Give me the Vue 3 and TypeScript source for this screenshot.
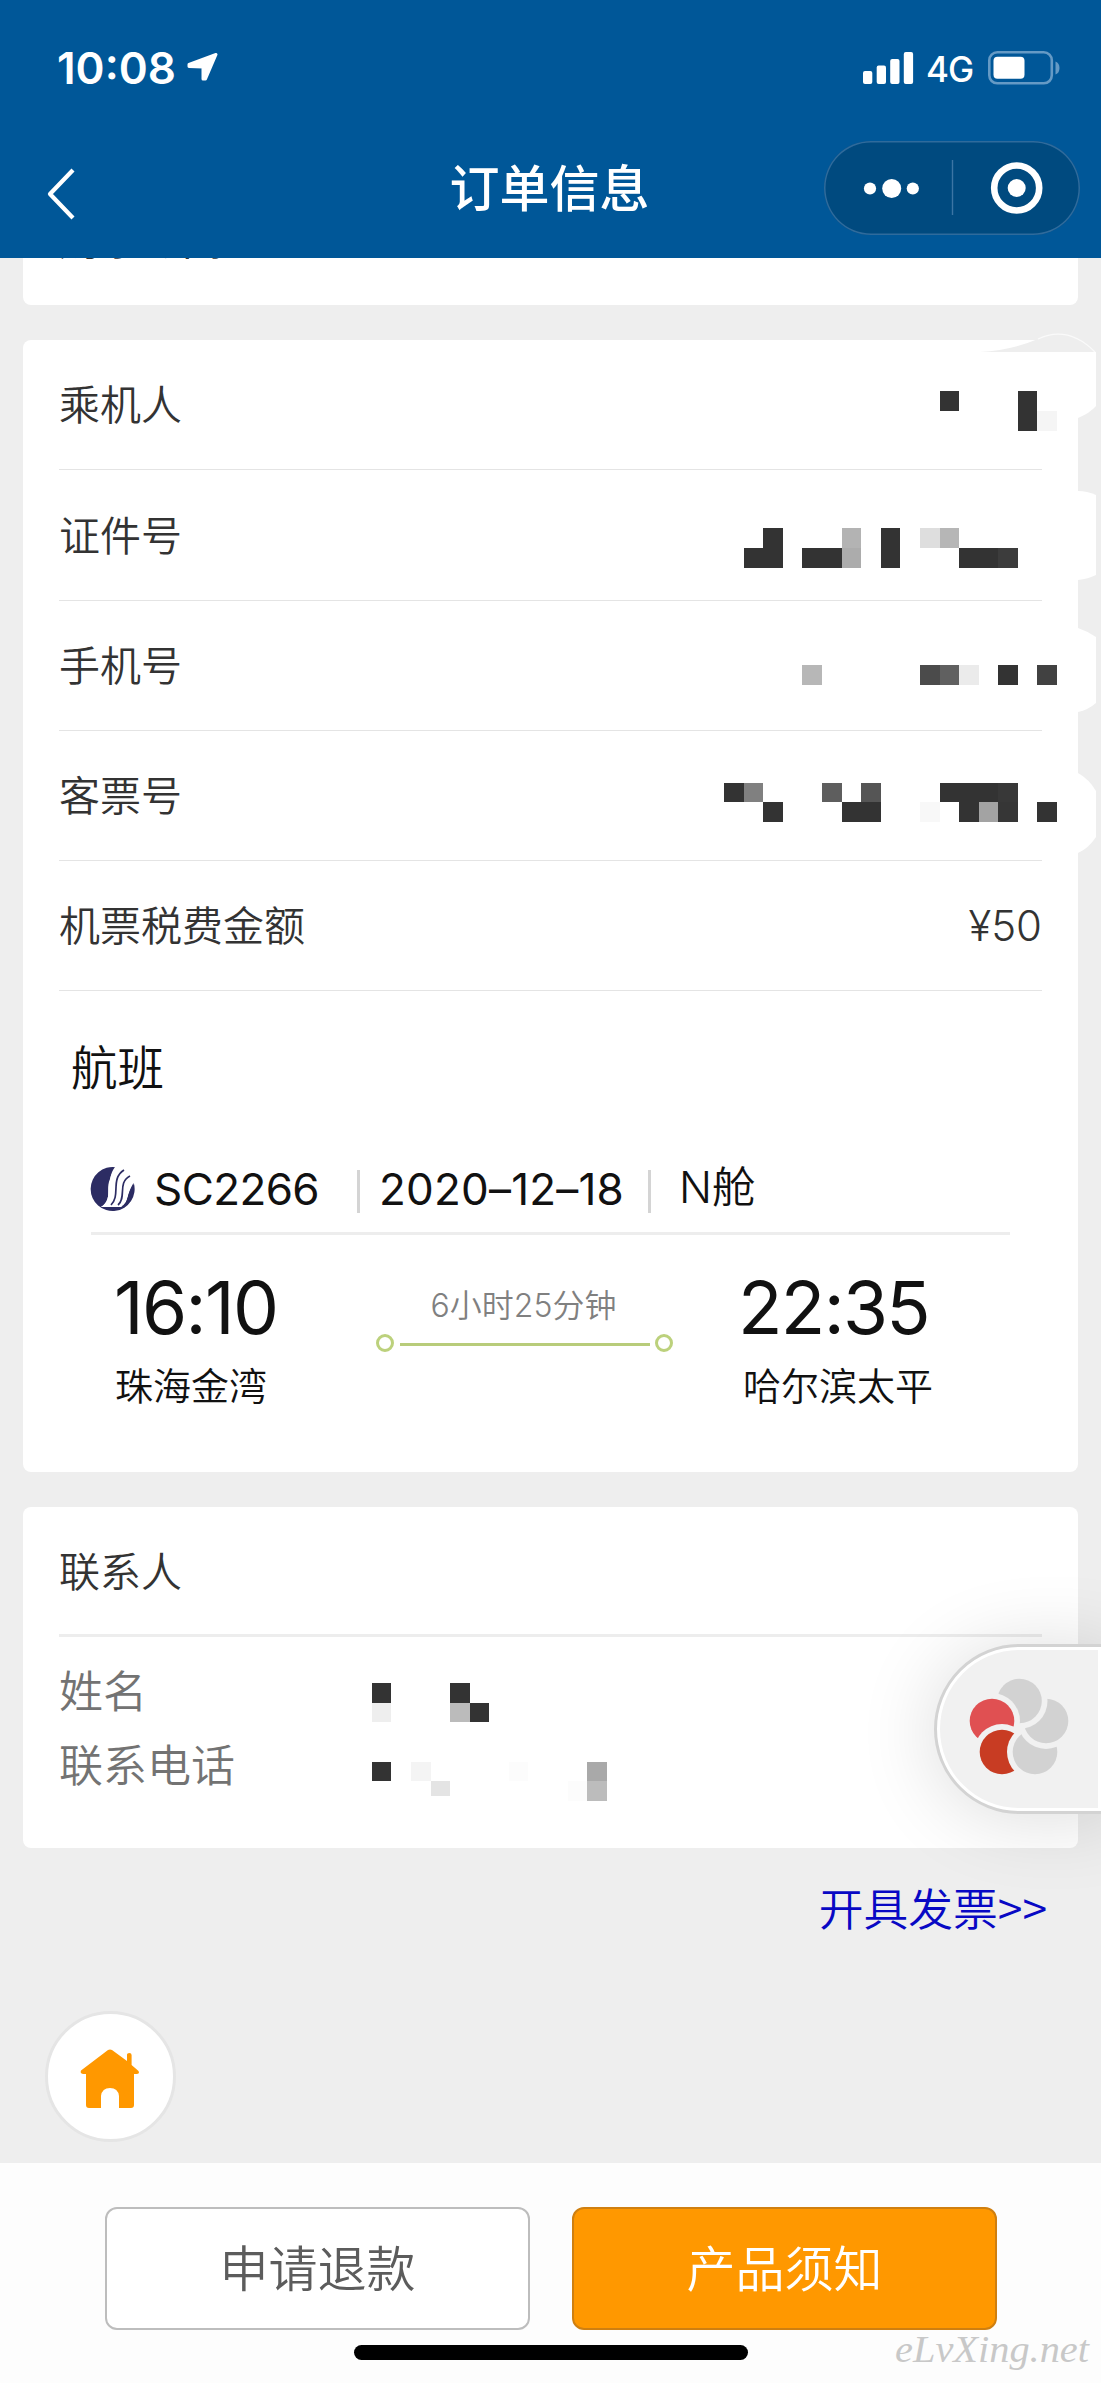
<script setup lang="ts">
interface Cell { c: number; r: number; fill: string; h?: number }

const rows: { label: string; value: string }[] = [
  { label: '乘机人', value: '' },
  { label: '证件号', value: '' },
  { label: '手机号', value: '' },
  { label: '客票号', value: '' },
  { label: '机票税费金额', value: '¥50' },
]

// Private values are covered by mosaic cells that sit on one page-wide grid.
const cellSize = 19.573
const dark = '#333333'
const cells: Cell[] = [
  { c: 48, r: 20, fill: dark }, { c: 52, r: 20, fill: dark }, { c: 52, r: 21, fill: dark }, { c: 53, r: 21, fill: '#f5f5f5' },
  { c: 39, r: 27, fill: dark }, { c: 38, r: 28, fill: dark }, { c: 39, r: 28, fill: dark },
  { c: 41, r: 28, fill: dark }, { c: 42, r: 28, fill: dark }, { c: 43, r: 27, fill: '#b3b3b3' }, { c: 43, r: 28, fill: '#acacac' },
  { c: 45, r: 27, fill: dark }, { c: 45, r: 28, fill: dark }, { c: 47, r: 27, fill: '#dedede' }, { c: 48, r: 27, fill: '#b6b6b6' },
  { c: 49, r: 28, fill: dark }, { c: 50, r: 28, fill: dark }, { c: 51, r: 28, fill: '#3c3c3c' },
  { c: 41, r: 34, fill: '#b7b7b7' }, { c: 47, r: 34, fill: '#4b4b4b' }, { c: 48, r: 34, fill: '#606060' },
  { c: 49, r: 34, fill: '#ebebeb' }, { c: 51, r: 34, fill: dark }, { c: 53, r: 34, fill: '#414141' },
  { c: 37, r: 40, fill: dark }, { c: 38, r: 40, fill: '#808080' }, { c: 39, r: 41, fill: dark },
  { c: 42, r: 40, fill: '#5e5e5e' }, { c: 44, r: 40, fill: '#555555' }, { c: 43, r: 41, fill: dark }, { c: 44, r: 41, fill: dark },
  { c: 47, r: 41, fill: '#f8f8f8' }, { c: 48, r: 40, fill: dark }, { c: 49, r: 40, fill: dark }, { c: 50, r: 40, fill: dark },
  { c: 51, r: 40, fill: '#383838' }, { c: 49, r: 41, fill: dark }, { c: 50, r: 41, fill: '#a3a3a3' }, { c: 51, r: 41, fill: '#363636' },
  { c: 53, r: 41, fill: dark },
  { c: 19, r: 86, fill: dark }, { c: 19, r: 87, fill: '#eeeeee' }, { c: 23, r: 86, fill: dark }, { c: 23, r: 87, fill: '#bbbbbb' }, { c: 24, r: 87, fill: dark },
  { c: 19, r: 90, fill: dark }, { c: 21, r: 90, fill: '#f4f4f4' }, { c: 22, r: 91, fill: '#e4e4e4', h: 15 }, { c: 26, r: 90, fill: '#fcfcfc' },
  { c: 29, r: 91, fill: '#fcfcfc' }, { c: 30, r: 90, fill: '#a9a9a9' }, { c: 30, r: 91, fill: '#bcbcbc' },
]
const at = (n: number) => Math.round(n * cellSize)

// Each petal is bitten by the next one in the list, leaving an even gap.
const petals = [
  { x: 85.5, y: 57, fill: '#d2d2d2', cut: [58, 77] },
  { x: 58, y: 77, fill: '#e05052', cut: [68, 108] },
  { x: 68, y: 108, fill: '#c83c23', cut: [101, 108] },
  { x: 101, y: 108, fill: '#d2d2d2', cut: [112, 77] },
  { x: 112, y: 77, fill: '#d2d2d2', cut: [85.5, 57] },
]
</script>

<template>
  <div class="page">
    <header class="header">
      <div class="status">
        <span class="clock">10:08</span>
        <svg class="locate" width="31" height="30" viewBox="0 0 31 30"><path d="M29 2.5 L18.5 27 L16 27 L16 15 L2 14.5 L2 12.5 Z" fill="#fff" stroke="#fff" stroke-width="3" stroke-linejoin="round" /></svg>
        <svg class="signal" width="51" height="32" viewBox="0 0 51 32" fill="#fff">
          <rect x="0" y="19" width="9.3" height="13" rx="2" /><rect x="13.7" y="13.5" width="9.3" height="18.5" rx="2" />
          <rect x="27.2" y="7" width="9.3" height="25" rx="2" /><rect x="40.8" y="0" width="9.3" height="32" rx="2" />
        </svg>
        <span class="network">4G</span>
        <svg class="battery" width="73" height="34" viewBox="0 0 73 34">
          <rect x="1.3" y="1.3" width="62.5" height="31" rx="8" fill="none" stroke="#659ac5" stroke-width="2.6" />
          <rect x="5.5" y="5.7" width="31" height="22" rx="4" fill="#fff" />
          <path d="M67.5 10.5 Q71.5 12 71.5 17 Q71.5 22 67.5 23.5 Z" fill="#659ac5" />
        </svg>
      </div>
      <div class="navbar">
        <svg class="back" width="32" height="54" viewBox="0 0 32 54"><path d="M27 3 L4 27 L27 51" fill="none" stroke="#fff" stroke-width="4.2" stroke-linejoin="round" /></svg>
        <h1 class="title">订单信息</h1>
        <div class="capsule">
          <svg width="256" height="94" viewBox="0 0 256 94">
            <g fill="#fff"><circle cx="46" cy="47.5" r="6.1" /><circle cx="67.7" cy="47.5" r="9.5" /><circle cx="88.8" cy="47.5" r="6.1" /><circle cx="192.7" cy="47" r="9" /></g>
            <path d="M128.5 19 V74" stroke="#3c75a4" stroke-width="1.4" />
            <circle cx="192.7" cy="47" r="22.5" fill="none" stroke="#fff" stroke-width="6.6" />
          </svg>
        </div>
      </div>
    </header>

    <main class="content">
      <section class="card previous"><div class="previous-text">购票时间</div></section>

      <section class="card order">
        <div v-for="row in rows" :key="row.label" class="row">
          <span>{{ row.label }}</span><span class="amount">{{ row.value }}</span>
        </div>
        <h2 class="flight-title">航班</h2>
        <div class="flight">
          <div class="flight-head">
            <svg class="airline" width="46" height="46" viewBox="0 0 46 46">
              <path d="M26 1.3 A22 22 0 1 0 43.8 17 L41 22 C36 30 39 35 31 41 L11 41 C23 34 15 24 20 13 C21 8 24 5 26 1.3 Z" fill="#2c2c63" />
              <path d="M11 41 H31 C40 36 35 28 45 17 L40 9 L28 1 L25 1 C15 14 24 33 11 41 Z" fill="#fff" />
              <path d="M34 4 C20 13 31 29 21 39 M40 10 C27 17 37 31 28 39" fill="none" stroke="#2c2c63" stroke-width="1.7" />
              <path d="M31 41 C40 35 36 29 43.5 17 C46 29 39 38 31 41 Z" fill="#2c2c63" />
            </svg>
            <span class="num code">SC2266</span><i class="bar bar-a"></i>
            <span class="num date">2020–12–18</span><i class="bar bar-b"></i>
            <span class="cabin">N舱</span>
          </div>
          <div class="route">
            <div class="stop from"><div class="time">16:10</div><div class="airport">珠海金湾</div></div>
            <div class="leg">
              <div class="duration">6小时25分钟</div>
              <div class="track"><i class="dot"></i><i class="line"></i><i class="dot"></i></div>
            </div>
            <div class="stop to"><div class="time">22:35</div><div class="airport">哈尔滨太平</div></div>
          </div>
        </div>
      </section>

      <section class="card contact">
        <h2 class="contact-title">联系人</h2>
        <div class="contact-row">姓名</div>
        <div class="contact-row">联系电话</div>
      </section>

      <a class="invoice">开具发票&gt;&gt;</a>

      <button class="home" aria-label="首页">
        <svg width="62" height="62" viewBox="0 0 62 62" fill="#ff9800">
          <path d="M29 2 Q31 .8 33 2 L48 13 V6.500 Q48 5 50.300 5 Q52.600 5 52.600 7 V17 L59.500 23 Q61 26 57.500 26 H55 V57 Q55 60 52 60 H40 V48 Q39 40 31 40 Q23 40 22 48 V60 H10 Q7 60 7 57 V26 H4 Q.8 25.500 2 22.500 Z" />
        </svg>
      </button>
    </main>

    <footer class="footer">
      <div class="actions"><button class="btn refund">申请退款</button><button class="btn notice">产品须知</button></div>
      <div class="indicator"></div>
      <svg class="watermark" width="215" height="54" viewBox="0 0 215 54"><text x="9" y="33" textLength="194" lengthAdjust="spacingAndGlyphs">eLvXing.net</text></svg>
    </footer>

    <svg class="redaction" width="1101" height="2383" viewBox="0 0 1101 2383">
      <path d="M980 352 Q1012 350 1038 339 Q1068 325 1095 352 Z" fill="#eee" />
      <path d="M1038 339 Q1068 325 1095 352" fill="none" stroke="#fafafa" stroke-width="1.200" />
      <g fill="#fff">
        <path d="M1070 352 H1096 V406 Q1090 413 1078 418 H1070 Z" />
        <path d="M1070 491 H1078 Q1087 491 1096 495 V575 Q1088 579 1078 580 H1070 Z" />
        <path d="M1070 628 H1078 Q1087 631 1096 637 V703 Q1088 710 1078 712 H1070 Z" />
        <path d="M1070 773 H1078 Q1089 779 1096 791 V837 Q1089 848 1078 853 H1070 Z" />
      </g>
      <rect v-for="(k, i) in cells" :key="i" :x="at(k.c)" :y="at(k.r)" :width="at(k.c + 1) - at(k.c)" :height="k.h ?? at(k.r + 1) - at(k.r)" :fill="k.fill" />
    </svg>

    <aside class="float">
      <div class="float-inner"></div>
      <svg class="flower" width="167" height="170" viewBox="0 0 167 170">
        <defs>
          <mask v-for="(p, i) in petals" :id="'petal-' + i" :key="i" maskUnits="userSpaceOnUse" x="0" y="0" width="167" height="170">
            <rect width="167" height="170" fill="#fff" /><circle :cx="p.cut[0]" :cy="p.cut[1]" r="28" fill="#000" />
          </mask>
        </defs>
        <circle v-for="(p, i) in petals" :key="i" :cx="p.x" :cy="p.y" r="22.3" :fill="p.fill" :mask="`url(#petal-${i})`" />
      </svg>
    </aside>
  </div>
</template>

<style>
body { margin: 0; background: #eee; }
</style>

<style scoped>
* { box-sizing: border-box; }
.page { position: relative; width: 1101px; height: 2383px; overflow: hidden; display: flex; flex-direction: column; background: #eee; color: #333; font-family: Inter, "Noto Sans CJK SC", sans-serif; }
h1, h2 { margin: 0; font-weight: 400; }
i { display: block; flex: none; }
svg { display: block; flex: none; }

.header { flex: none; height: 258px; background: #005798; color: #fff; position: relative; z-index: 1; }
.status { display: flex; align-items: flex-start; height: 136px; padding: 52px 0 0 57px; }
.clock { width: 130px; font-size: 44px; line-height: 32px; font-weight: 600; white-space: nowrap; }
.locate { width: 31px; }
.signal { margin-left: 645px; }
.network { width: 60px; margin: 4px 0 0 12px; font-size: 35px; line-height: 26px; font-weight: 500; letter-spacing: -1px; }
.battery { margin: -1px 0 0 2px; }
.navbar { display: grid; grid-template-columns: 277px 1fr 277px; align-items: start; }
.back { margin: 31px 0 0 46px; }
.title { text-align: center; font-size: 50px; line-height: 50px; font-weight: 500; margin: 28px 0 0 -2px; }
.capsule { width: 256px; height: 94px; margin-top: 5px; border-radius: 47px; background: #004a7f; box-shadow: inset 0 0 0 1.500px #2f6b9c; }

.content { flex: 1; display: flex; flex-direction: column; padding: 0 23px 0 23px; }
.card { flex: none; background: #fff; border-radius: 8px; }
.previous { height: 47px; border-radius: 0 0 8px 8px; overflow: hidden; }
.previous-text { margin: -41px 0 0 36px; font-size: 41px; line-height: 46px; }
.order { height: 1132px; margin-top: 35px; padding: 0 36px; }
.row { height: 130px; padding-bottom: 5px; display: flex; justify-content: space-between; align-items: center; border-bottom: 1px solid #e4e4e4; font-size: 41px; font-weight: 350; }
.row:nth-child(2) { height: 131px; }
.amount { padding-top: 4px; font-size: 42px; }
.flight-title { margin: 43px 0 0 12px; font-size: 46.500px; line-height: 68px; font-weight: 350; color: #111; }
.flight { margin: 0 32px; color: #111; }
.flight-head { height: 133px; padding-top: 64px; border-bottom: 3px solid #ededed; display: flex; align-items: flex-start; }
.airline { margin: 0 0 0 -1px; }
.num { flex: none; font-size: 44px; line-height: 46px; white-space: nowrap; font-weight: 400; }
.code { width: 221px; padding-left: 18px; letter-spacing: -.6px; }
.bar { width: 3px; height: 43px; margin-top: 4px; background: #d4d4d4; }
.date { width: 269px; margin-left: 19px; letter-spacing: .2px; }
.cabin { margin: -2px 0 0 28px; font-size: 43.500px; line-height: 46px; white-space: nowrap; font-weight: 350; }
.route { display: flex; height: 190px; }
.stop { flex: none; white-space: nowrap; }
.from { width: 260px; padding-left: 24px; }
.to { margin-left: 69px; }
.time { margin: 37px 0 0 -1px; font-size: 73px; line-height: 72px; height: 72px; letter-spacing: -1.700px; font-weight: 400; }
.to .time { margin-left: -4px; }
.airport { margin-top: 15px; font-size: 38px; line-height: 54px; font-weight: 350; }
.to .airport { padding-left: 1px; }
.leg { flex: none; width: 297px; margin-left: 25px; }
.duration { margin: 48px 0 0 -2px; text-align: center; font-size: 32px; line-height: 46px; color: #808080; font-weight: 350; }
.track { display: flex; align-items: center; justify-content: space-between; height: 18px; margin-top: 5px; }
.dot { width: 18px; height: 18px; border: 3.500px solid #bcd17c; border-radius: 50%; }
.line { width: 250px; height: 3px; background: #b8cc7a; margin-top: 2px; }

.contact { height: 341px; margin-top: 35px; padding: 0 36px; }
.contact-title { height: 130px; border-bottom: 3px solid #ededed; font-size: 41px; line-height: 131px; font-weight: 350; }
.contact-row { height: 74px; font-size: 44px; line-height: 74px; color: #737373; font-weight: 350; }
.contact-title + .contact-row { margin-top: 18px; }

.invoice { margin: 25px 31px 0 0; text-align: right; font-size: 44.800px; line-height: 68px; color: #0808c4; font-family: "Noto Sans CJK SC", sans-serif; font-weight: 350; }
.home { width: 131px; height: 131px; margin: 70px 0 0 22px; padding: 0; display: flex; align-items: center; justify-content: center; background: #fff; border: 3px solid #e5e5e5; border-radius: 50%; }
.home svg { margin: 4px 0 0 -1px; }

.footer { position: relative; flex: none; height: 220px; background: #fdfdfd; }
.actions { display: flex; gap: 42px; padding: 44px 0 0 105px; }
.btn { width: 425px; height: 123px; padding: 2px 0 0; border-radius: 12px; font: 350 49px/116px Inter, "Noto Sans CJK SC", sans-serif; }
.refund { background: #fff; border: 2px solid #bdbdbd; color: #5c5c5c; }
.notice { background: #ff9800; border: 2px solid #cf7f10; color: #fff; }
.indicator { width: 394px; height: 15px; margin: 15px 0 0 354px; border-radius: 8px; background: #000; }
.watermark { position: absolute; right: 0; bottom: 0; }
.watermark text { font: italic 400 38px "Liberation Serif", serif; fill: #c8c8c8; }

.redaction { position: absolute; left: 0; top: 0; pointer-events: none; }
.float { position: absolute; left: 934px; top: 1644px; width: 190px; height: 170px; border: 3px solid #d3d3d3; border-radius: 85px 0 0 85px; background: #fff; box-shadow: 0 4px 80px rgba(0, 0, 0, .14); }
.float-inner { width: 158px; height: 158px; margin: 3px; border-radius: 79px 0 0 79px; background: #f1f1f1; }
.flower { position: absolute; left: -3px; top: -3px; }
</style>
